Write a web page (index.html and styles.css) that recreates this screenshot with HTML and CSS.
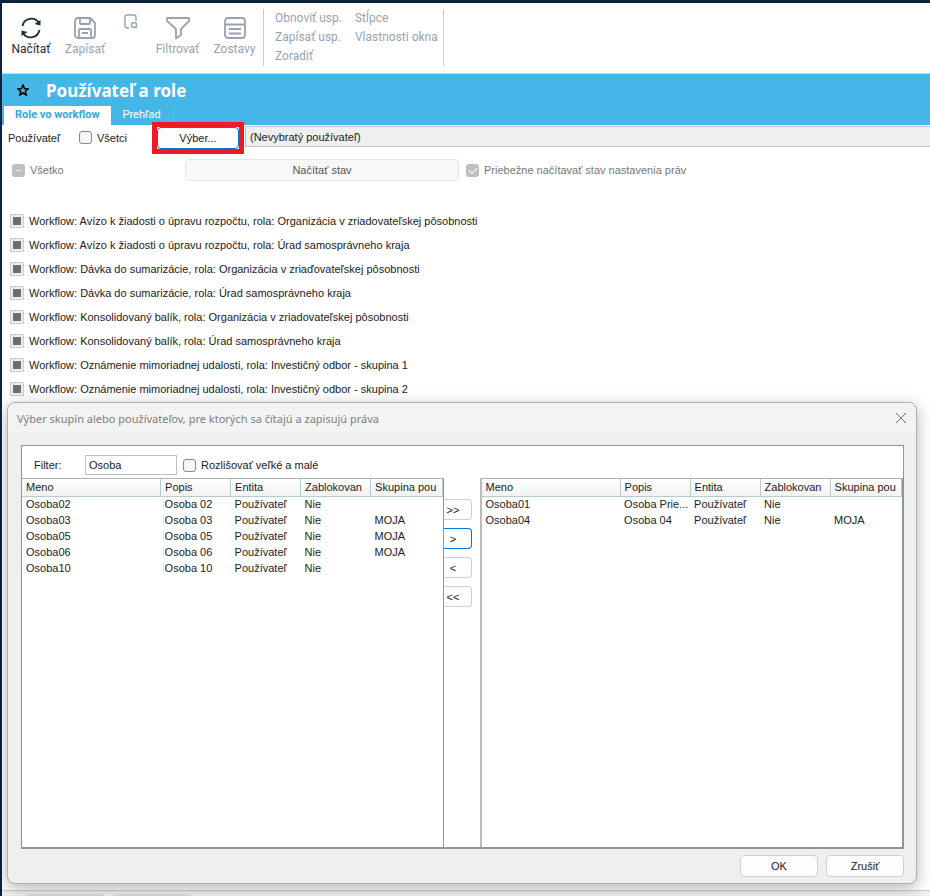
FILE: index.html
```html
<!DOCTYPE html>
<html lang="sk">
<head>
    <meta charset="UTF-8">
    <meta name="viewport" content="width=device-width, initial-scale=1.0">
    <title>Používateľ a role</title>
    <link rel="stylesheet" href="styles.css">
</head>
<body>
    <div class="window">
        <div class="toolbar">
            <button class="tool tool-active">
                <svg width="24" height="24" viewBox="0 0 24 24"><path d="M3.500 10A9 9 0 0 1 20 7M20.500 14A9 9 0 0 1 4 17"/><path class="solid" d="M21.500 4v5.500l-6-1.500zM2.500 20v-5.500l6 1.500z"/></svg>
                Načítať
            </button>
            <button class="tool">
                <svg width="24" height="24" viewBox="0 0 24 24"><path d="M5 2h12l5 5v12a3 3 0 0 1-3 3H5a3 3 0 0 1-3-3V5a3 3 0 0 1 3-3zM7 2v5a1 1 0 0 0 1 1h8a1 1 0 0 0 1-1V2M6 22v-8a1 1 0 0 1 1-1h10a1 1 0 0 1 1 1v8M9 17h6"/></svg>
                Zapísať
            </button>
            <button class="tool-small" aria-label="Náhľad">
                <svg width="16" height="16" viewBox="0 0 16 16"><path d="M6 14H4a2 2 0 0 1-2-2V3a2 2 0 0 1 2-2h7a2 2 0 0 1 2 2v4M13 13l1 1"/><circle cx="11" cy="11" r="2.500"/></svg>
            </button>
            <button class="tool">
                <svg width="24" height="24" viewBox="0 0 24 24"><path d="M1 2h22v3l-8 8v6l-5 3.500V13L1 5z"/></svg>
                Filtrovať
            </button>
            <button class="tool">
                <svg width="24" height="24" viewBox="0 0 24 24"><rect x="2" y="2" width="20" height="20" rx="3"/><path d="M2 8.500h20M6 13h12M6 17.500h12"/></svg>
                Zostavy
            </button>
            <div class="tool-links">
                <a href="#">Obnoviť usp.</a>
                <a href="#">Stĺpce</a>
                <a href="#">Zapísať usp.</a>
                <a href="#">Vlastnosti okna</a>
                <a href="#">Zoradiť</a>
            </div>
        </div>

        <header class="page-header">
            <div class="title-row">
                <svg width="12" height="12" viewBox="0 0 12 12"><path d="M6 1l1.500 3.500 3.500.3-2.700 2.400.9 3.800L6 9l-3.200 2 .9-3.800L1 4.800l3.500-.3z"/></svg>
                <h1>Používateľ a role</h1>
            </div>
            <nav class="tabs">
                <a class="tab tab-active" href="#">Role vo workflow</a>
                <a class="tab" href="#">Prehľad</a>
            </nav>
        </header>

        <main>
            <div class="user-row">
                <span class="user-label">Používateľ</span>
                <label class="check"><input type="checkbox"> Všetci</label>
                <div class="highlight">
                    <button class="btn btn-focus">Výber...</button>
                </div>
                <input class="user-field" type="text" value="(Nevybratý používateľ)" aria-label="Vybratý používateľ" readonly>
            </div>
            <div class="state-row">
                <label class="check check-off"><input class="minus" type="checkbox" disabled> Všetko</label>
                <button class="btn btn-off" disabled>Načítať stav</button>
                <label class="check check-off"><input type="checkbox" checked disabled> Priebežne načítavať stav nastavenia práv</label>
            </div>
            <div class="role-list">
                <label class="role"><input type="checkbox"> Workflow: Avízo k žiadosti o úpravu rozpočtu, rola: Organizácia v zriadovateľskej pôsobnosti</label>
                <label class="role"><input type="checkbox"> Workflow: Avízo k žiadosti o úpravu rozpočtu, rola: Úrad samosprávneho kraja</label>
                <label class="role"><input type="checkbox"> Workflow: Dávka do sumarizácie, rola: Organizácia v zriaďovateľskej pôsobnosti</label>
                <label class="role"><input type="checkbox"> Workflow: Dávka do sumarizácie, rola: Úrad samosprávneho kraja</label>
                <label class="role"><input type="checkbox"> Workflow: Konsolidovaný balík, rola: Organizácia v zriadovateľskej pôsobnosti</label>
                <label class="role"><input type="checkbox"> Workflow: Konsolidovaný balík, rola: Úrad samosprávneho kraja</label>
                <label class="role"><input type="checkbox"> Workflow: Oznámenie mimoriadnej udalosti, rola: Investičný odbor - skupina 1</label>
                <label class="role"><input type="checkbox"> Workflow: Oznámenie mimoriadnej udalosti, rola: Investičný odbor - skupina 2</label>
            </div>
        </main>

        <footer class="status-bar">
            <span></span>
            <span></span>
        </footer>

        <div class="dialog" role="dialog" aria-labelledby="dialog-title">
            <div class="dialog-header">
                <h2 id="dialog-title">Výber skupín alebo používateľov, pre ktorých sa čítajú a zapisujú práva</h2>
                <button class="close" aria-label="Zavrieť">
                    <svg width="12" height="12" viewBox="0 0 12 12"><path d="M1 1l10 10M11 1L1 11"/></svg>
                </button>
            </div>
            <div class="panel">
                <div class="filter-row">
                    <label class="filter-label" for="filter">Filter:</label>
                    <input class="filter-input" type="text" id="filter" value="Osoba">
                    <label class="check"><input type="checkbox"> Rozlišovať veľké a malé</label>
                </div>
                <div class="lists">
                    <div class="list">
                        <table>
                            <colgroup><col class="col-name"><col><col><col><col class="col-group"></colgroup>
                            <thead>
                                <tr><th>Meno</th><th>Popis</th><th>Entita</th><th>Zablokovan</th><th>Skupina pou</th></tr>
                            </thead>
                            <tbody>
                                <tr><td>Osoba02</td><td>Osoba 02</td><td>Používateľ</td><td>Nie</td><td></td></tr>
                                <tr><td>Osoba03</td><td>Osoba 03</td><td>Používateľ</td><td>Nie</td><td>MOJA</td></tr>
                                <tr><td>Osoba05</td><td>Osoba 05</td><td>Používateľ</td><td>Nie</td><td>MOJA</td></tr>
                                <tr><td>Osoba06</td><td>Osoba 06</td><td>Používateľ</td><td>Nie</td><td>MOJA</td></tr>
                                <tr><td>Osoba10</td><td>Osoba 10</td><td>Používateľ</td><td>Nie</td><td></td></tr>
                            </tbody>
                        </table>
                    </div>
                    <div class="movers">
                        <button>&gt;&gt;</button>
                        <button class="current">&gt;</button>
                        <button>&lt;</button>
                        <button>&lt;&lt;</button>
                    </div>
                    <div class="list">
                        <table>
                            <colgroup><col class="col-name"><col><col><col><col class="col-group"></colgroup>
                            <thead>
                                <tr><th>Meno</th><th>Popis</th><th>Entita</th><th>Zablokovan</th><th>Skupina pou</th></tr>
                            </thead>
                            <tbody>
                                <tr><td>Osoba01</td><td>Osoba Prie...</td><td>Používateľ</td><td>Nie</td><td></td></tr>
                                <tr><td>Osoba04</td><td>Osoba 04</td><td>Používateľ</td><td>Nie</td><td>MOJA</td></tr>
                            </tbody>
                        </table>
                    </div>
                </div>
            </div>
            <div class="dialog-footer">
                <button class="btn">OK</button>
                <button class="btn">Zrušiť</button>
            </div>
        </div>
    </div>
</body>
</html>
```
FILE: styles.css
```css
* {
    box-sizing: border-box;
}
body {
    margin: 0;
    font-family: "Liberation Sans", Arial, sans-serif;
    font-size: 11px;
    color: #222;
}
button, input {
    font: inherit;
    color: inherit;
    margin: 0;
}
a {
    color: inherit;
    text-decoration: none;
}
svg {
    display: block;
    fill: none;
    stroke: currentColor;
}
.window {
    position: relative;
    display: flex;
    flex-direction: column;
    min-height: 100vh;
    border-top: 3px solid #0c2340;
    border-left: 2px solid #0c2340;
    background: #fff;
}

/* toolbar */
.toolbar {
    display: flex;
    align-items: flex-start;
    height: 71px;
    padding: 5px 2px;
    border-bottom: 1px solid #ccdbe3;
    font-family: Roboto, sans-serif;
    font-size: 12px;
    color: #99a3af;
}
.tool, .tool-small {
    border: 0;
    background: none;
    padding: 0;
}
.tool {
    display: flex;
    flex-direction: column;
    align-items: center;
    gap: 1px;
    width: 54px;
    padding-top: 8px;
    line-height: 16px;
}
.tool svg {
    stroke-width: 1.8;
    stroke-linejoin: round;
}
.tool-active {
    color: #1c2c40;
}
.solid {
    fill: currentColor;
    stroke: none;
}
.tool-small {
    width: 37px;
    padding: 6px 11px;
}
.tool-small svg {
    stroke-width: 1.4;
}
.tool-small + .tool, .tool-small + .tool + .tool {
    width: 57px;
}
.tool-links {
    display: grid;
    grid-template-columns: auto auto;
    column-gap: 13px;
    margin-top: 1px;
    height: 57px;
    padding: 0 5px 0 11px;
    border-left: 1px solid #ccc;
    border-right: 1px solid #ccc;
    line-height: 19px;
}

/* title and tabs */
.page-header {
    background: #45b6e8;
    color: #fff;
}
.title-row {
    display: flex;
    align-items: center;
    gap: 17px;
    height: 32px;
    padding-left: 15px;
}
.title-row svg {
    color: #000;
    stroke-width: 1.5;
}
.title-row h1 {
    margin: 0;
    font: bold 17px "Noto Sans", sans-serif;
}
.tabs {
    display: flex;
    height: 19px;
    padding-left: 2px;
    font-family: Roboto, sans-serif;
}
.tab {
    padding: 0 12px;
    border-right: 1px solid #8aaebe;
    line-height: 18px;
}
.tab-active {
    padding: 0 11px;
    border-right: 0;
    background: #fff;
    color: #31a9de;
    font-weight: bold;
}

/* checkboxes */
.check {
    display: flex;
    align-items: center;
    gap: 5px;
}
.check input {
    appearance: none;
    display: grid;
    place-items: center;
    width: 13px;
    height: 13px;
    border: 1px solid #888;
    border-radius: 3px;
    background: #f6f6f6;
}
.check-off {
    color: #777;
}
.check-off input {
    border: 0;
    background: #bfbfbf;
}
.check input:checked::before {
    content: "";
    width: 7px;
    height: 4px;
    margin-bottom: 2px;
    border-left: 1px solid #fff;
    border-bottom: 1px solid #fff;
    transform: rotate(-45deg);
}
.check .minus::before {
    content: "";
    width: 5px;
    height: 1px;
    background: #eee;
}

/* buttons */
.btn {
    height: 22px;
    border: 1px solid #d0d0d0;
    border-radius: 4px;
    background: #fdfdfd;
}
.btn-focus {
    width: 100%;
    border-color: #0078d4;
}
.btn-off {
    flex: 0 1 274px;
    border-color: #e6e6e6;
    background: #f8f8f8;
    color: #555;
}

/* form */
main {
    flex: 1;
}
.user-row {
    display: flex;
    align-items: center;
    height: 25px;
    padding-left: 6px;
}
.user-label {
    width: 71px;
}
.highlight {
    position: relative;
    width: 82px;
    margin: 0 6px 0 30px;
}
.highlight::after {
    content: "";
    position: absolute;
    inset: -5px;
    border: 5px solid #ed1c24;
    pointer-events: none;
}
.user-field {
    flex: 1;
    align-self: flex-start;
    height: 21px;
    margin-top: 1px;
    padding: 0 4px;
    border: 1px solid #c4c4c4;
    border-right: 0;
    background: #efefef;
}
.state-row {
    display: flex;
    align-items: center;
    gap: 7px;
    padding: 9px 0 0 10px;
}
.state-row .check:first-child {
    width: 166px;
}
.role-list {
    padding: 28px 0 0 8px;
}
.role {
    display: flex;
    align-items: center;
    gap: 5px;
    height: 24px;
}
.role input {
    appearance: none;
    width: 14px;
    height: 14px;
    border: 1px solid #ccc;
    background: #6d6d6d;
    box-shadow: inset 0 0 0 2px #eee;
}
.status-bar {
    display: flex;
    gap: 9px;
    height: 6px;
    padding: 3px 0 0 24px;
    border-top: 1px solid #c3ced6;
    background: #efefef;
}
.status-bar span {
    width: 78px;
    border-radius: 3px 3px 0 0;
    background: #ddd;
}

/* dialog */
.dialog {
    position: absolute;
    top: 399px;
    right: 13px;
    bottom: 12px;
    left: 5px;
    display: flex;
    flex-direction: column;
    padding: 0 12px 0 13px;
    border: 1px solid #b0b0b0;
    border-radius: 8px;
    background: #efefef;
    box-shadow: 0 4px 16px rgba(0, 0, 0, 0.3);
}
.dialog-header {
    display: flex;
    align-items: center;
    justify-content: space-between;
    height: 30px;
    margin: 0 -12px 12px -13px;
    padding: 0 9px;
    border-radius: 8px 8px 0 0;
    background: #f3f3f3;
}
.dialog-header h2 {
    margin: 0;
    font: 11px "Noto Sans", sans-serif;
    color: #808080;
}
.close {
    padding: 0;
    border: 0;
    background: none;
    color: #777;
}
.panel {
    flex: 1;
    display: flex;
    flex-direction: column;
    border: 1px solid #929297;
    border-bottom-width: 2px;
    background: #fff;
}
.filter-row {
    display: flex;
    align-items: center;
    height: 32px;
    padding: 6px 0 0 12px;
}
.filter-label {
    width: 51px;
}
.filter-input {
    width: 92px;
    height: 20px;
    margin-right: 6px;
    padding: 0 3px;
    border: 1px solid #c0c0c8;
}
.lists {
    flex: 1;
    display: flex;
}
.list {
    flex: 1;
    border-top: 1px solid #a9b5b8;
    border-right: 1px solid #8d989c;
}
.movers + .list {
    border-left: 2px solid #bcbcc0;
}
table {
    width: 100%;
    border-collapse: collapse;
    table-layout: fixed;
}
.col-name {
    width: 33%;
}
.col-group {
    width: 17%;
}
th, td {
    padding: 0 4px;
    font-weight: normal;
    text-align: left;
    white-space: nowrap;
}
th {
    height: 17px;
    border-right: 1px solid #b9cccc;
    border-bottom: 1px solid #b9cccc;
    background: linear-gradient(#fff, #f2f2f2);
}
td {
    height: 16px;
}
.movers {
    display: flex;
    flex-direction: column;
    gap: 8px;
    width: 36px;
    padding: 21px 8px 0 0;
}
.movers button {
    height: 21px;
    padding: 0 8px 0 0;
    border: 1px solid #d0d0d0;
    border-left: 0;
    border-radius: 0 4px 4px 0;
    background: #fdfdfd;
}
.movers .current {
    border-color: #0078d4;
}
.dialog-footer {
    display: flex;
    justify-content: flex-end;
    gap: 8px;
    padding: 6px 0;
}
.dialog-footer .btn {
    width: 78px;
}
```
